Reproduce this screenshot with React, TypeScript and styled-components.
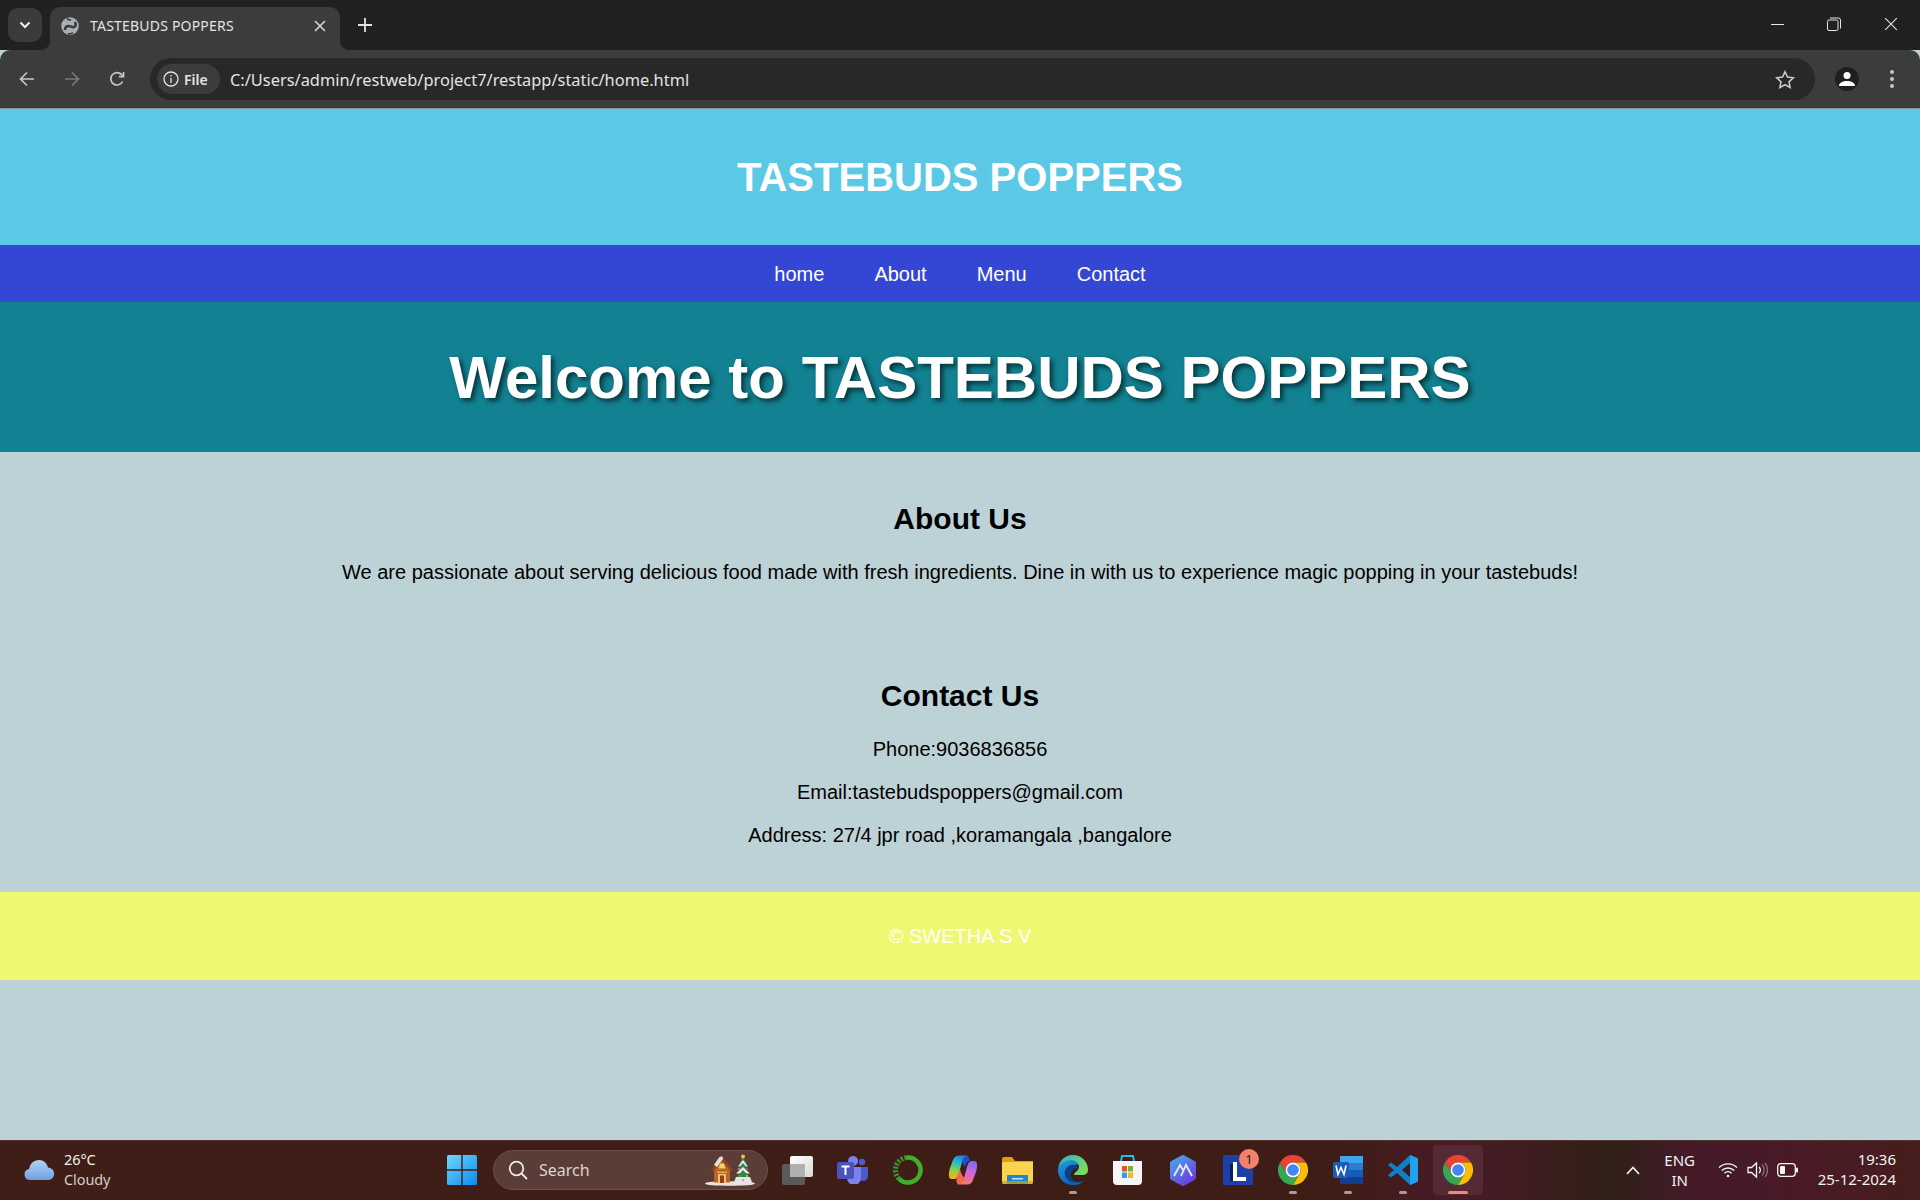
import React from "react";
import styled, { createGlobalStyle } from "styled-components";

const GlobalStyle = createGlobalStyle`
  html, body {
    margin: 0;
    padding: 0;
    height: 100%;
    overflow: hidden;
    background: #bdd2d6;
  }
`;

const Screen = styled.div`
  width: 1920px;
  height: 1200px;
  display: flex;
  flex-direction: column;
  overflow: hidden;
  font-family: "Liberation Sans", Arial, sans-serif;
`;

/* browser chrome */
const TabStrip = styled.div`
  height: 50px;
  flex: none;
  display: flex;
  align-items: flex-end;
  background: #202222;
  padding-left: 8px;
  color: #e3e3e3;
  font-family: "Noto Sans", "Open Sans", sans-serif;
`;

const TabMenu = styled.div`
  width: 34px;
  height: 34px;
  margin-bottom: 8px;
  margin-right: 8px;
  border-radius: 10px;
  background: #3a3b3b;
  display: flex;
  align-items: center;
  justify-content: center;
`;

const Tab = styled.div`
  position: relative;
  width: 290px;
  height: 43px;
  box-sizing: border-box;
  background: #3c3c3c;
  border-radius: 10px 10px 0 0;
  display: flex;
  align-items: center;
  padding: 0 14px 6px 11px;
  font-size: 14px;
  letter-spacing: 0.2px;

  &::before,
  &::after {
    content: "";
    position: absolute;
    bottom: 0;
    width: 10px;
    height: 10px;
  }

  &::before {
    left: -10px;
    background: radial-gradient(circle at 0 0, transparent 10px, #3c3c3c 10.5px);
  }

  &::after {
    right: -10px;
    background: radial-gradient(circle at 100% 0, transparent 10px, #3c3c3c 10.5px);
  }
`;

const TabTitle = styled.span`
  flex: 1;
  margin-left: 11px;
`;

const NewTab = styled.div`
  width: 36px;
  height: 36px;
  margin: 0 0 7px 7px;
  display: flex;
  align-items: center;
  justify-content: center;
`;

const WindowControls = styled.div`
  margin-left: auto;
  height: 100%;
  display: flex;
  align-items: center;
  gap: 43px;
  padding-right: 22px;
  padding-bottom: 2px;
  box-sizing: border-box;
`;

const Toolbar = styled.div`
  height: 58px;
  flex: none;
  box-sizing: border-box;
  background: #3c3c3c;
  border-top-left-radius: 10px;
  border-top-right-radius: 10px;
  display: flex;
  align-items: center;
  padding: 0 14px 0 9px;
`;

const NavButton = styled.div`
  width: 36px;
  height: 36px;
  margin-right: 9px;
  display: flex;
  align-items: center;
  justify-content: center;
`;

const Omnibox = styled.div`
  width: 1665px;
  height: 42px;
  margin-left: 6px;
  box-sizing: border-box;
  border-radius: 21px;
  background: #282828;
  display: flex;
  align-items: center;
  padding: 0 20px 0 7px;
  font-family: "Noto Sans", "Open Sans", sans-serif;
  color: #e3e3e3;
  font-size: 16.4px;
  letter-spacing: 0;
`;

const SecurityChip = styled.div`
  width: 63px;
  height: 30px;
  border-radius: 15px;
  background: #3c3c3c;
  display: flex;
  align-items: center;
  gap: 5px;
  padding-left: 6px;
  box-sizing: border-box;
  font-size: 14px;
  font-weight: 600;
  margin-right: 10px;
`;

const Url = styled.span`
  flex: 1;
`;

const Avatar = styled.div`
  width: 24px;
  height: 24px;
  margin-left: 20px;
  border-radius: 50%;
  background: #1f1f1f;
  display: flex;
  align-items: center;
  justify-content: center;
`;

const Kebab = styled.div`
  margin-left: 31px;
  display: flex;
  flex-direction: column;
  gap: 3px;

  i {
    width: 4px;
    height: 4px;
    border-radius: 50%;
    background: #c7c7c7;
  }
`;

/* page */
const Page = styled.div`
  flex: 1;
  min-height: 0;
  overflow: hidden;
  background: #bdd2d6;
  border-top: 1px solid #8a8f92;
  box-sizing: border-box;
  text-align: center;
  color: #000;
`;

const Header = styled.header`
  height: 136px;
  background: #5bc8e6;
  display: flex;
  align-items: center;
  justify-content: center;
  color: #fff;
`;

const SiteTitle = styled.h1`
  margin: 0;
  font-size: 40px;
  font-weight: 700;
`;

const Nav = styled.nav`
  height: 57px;
  box-sizing: border-box;
  padding-top: 1px;
  background: #3447d4;
  display: flex;
  align-items: center;
  justify-content: center;
  gap: 50px;
`;

const NavLink = styled.a`
  color: #fff;
  font-size: 20px;
  text-decoration: none;
`;

const Hero = styled.div`
  height: 150px;
  background: #128191;
  display: flex;
  align-items: center;
  justify-content: center;
`;

const HeroTitle = styled.h2`
  margin: 0;
  color: #fff;
  font-size: 60px;
  font-weight: 700;
  text-shadow: 3px 3px 5px rgba(0, 0, 0, 0.6);
`;

const Section = styled.section<{ $gap: number }>`
  padding: 25px 0 24px;
  margin-bottom: ${(p) => p.$gap}px;
`;

const SectionTitle = styled.h2`
  margin: 25px 0;
  font-size: 30px;
  font-weight: 700;
`;

const Text = styled.p`
  margin: 20px 0;
  font-size: 20px;
`;

const Footer = styled.footer`
  height: 88px;
  background: #f0f872;
  color: #fff;
  font-size: 20px;
  display: flex;
  align-items: center;
  justify-content: center;
`;

/* taskbar */
const Taskbar = styled.div`
  height: 60px;
  flex: none;
  box-sizing: border-box;
  border-top: 1px solid #55382f;
  padding-bottom: 1px;
  background: linear-gradient(
    90deg,
    #3f1e18 0%,
    #3f1d17 70%,
    #4a1a28 76%,
    #3a1e1c 81%,
    #2f2018 84%,
    #451a28 88%,
    #4a1a26 94%,
    #451e1c 100%
  );
  display: grid;
  grid-template-columns: 440px auto 1fr;
  align-items: center;
  color: #f2f2f2;
  font-family: "Noto Sans", "Open Sans", sans-serif;
`;

const Weather = styled.div`
  display: flex;
  align-items: center;
  padding-left: 24px;
  gap: 9px;
  font-size: 14.5px;
  line-height: 20px;
  letter-spacing: -0.1px;
`;

const WeatherText = styled.div`
  padding-bottom: 2px;
`;

const WeatherNote = styled.div`
  color: #d6cdc9;
`;

const CenterGroup = styled.div`
  display: flex;
  align-items: center;
`;

const StartSlot = styled.div`
  width: 44px;
  height: 48px;
  display: flex;
  align-items: center;
  justify-content: center;
  margin-right: 9px;
`;

const SearchBox = styled.div`
  width: 275px;
  height: 40px;
  box-sizing: border-box;
  border-radius: 20px;
  background: #5a3d36;
  border: 1px solid #6c5048;
  display: flex;
  align-items: center;
  padding: 0 7px 0 14px;
  gap: 11px;
  font-size: 16px;
  color: #ddd5d2;
  margin-right: 2px;
`;

const SearchLabel = styled.span`
  flex: 1;
`;

const AppSlot = styled.div<{ $active?: boolean }>`
  position: relative;
  width: 55px;
  height: 50px;
  display: flex;
  align-items: center;
  justify-content: center;

  &::before {
    content: "";
    position: absolute;
    top: 0;
    bottom: 0;
    left: 3px;
    right: 2px;
    border-radius: 5px;
    background: ${(p) => (p.$active ? "rgba(255,255,255,0.07)" : "transparent")};
  }

  svg {
    position: relative;
  }
`;

const RunDot = styled.span<{ $active?: boolean }>`
  position: absolute;
  left: 50%;
  bottom: 1px;
  transform: translateX(-50%);
  width: ${(p) => (p.$active ? 20 : 8)}px;
  height: 3px;
  border-radius: 2px;
  background: ${(p) => (p.$active ? "#f08a72" : "#a89c98")};
`;

const Badge = styled.span`
  position: absolute;
  top: 4px;
  right: 6px;
  width: 20px;
  height: 20px;
  border-radius: 50%;
  background: #f4826a;
  color: #2a1510;
  font-size: 13px;
  display: flex;
  align-items: center;
  justify-content: center;
`;

const Tray = styled.div`
  display: flex;
  align-items: center;
  justify-content: flex-end;
  padding-right: 24px;
`;

const TrayLang = styled.div`
  width: 40px;
  margin: 0 18px 0 20px;
  padding-bottom: 1px;
  text-align: center;
  font-size: 15px;
  line-height: 20px;
`;

const TrayIcons = styled.div`
  display: flex;
  align-items: center;
  gap: 9px;
`;

const Clock = styled.div`
  margin-left: 20px;
  padding-bottom: 2px;
  text-align: right;
  font-size: 15px;
  line-height: 20px;
`;

const Back = () => (
  <svg width="18" height="18" viewBox="0 0 18 18" fill="none" stroke="#c7c7c7" strokeWidth="1.7">
    <path d="M16 9H2.500M9 2.500 2.500 9 9 15.500" />
  </svg>
);

const Forward = () => (
  <svg width="18" height="18" viewBox="0 0 18 18" fill="none" stroke="#7a7a7a" strokeWidth="1.7">
    <path d="M2 9h13.500M9 2.500 15.500 9 9 15.500" />
  </svg>
);

const Reload = () => (
  <svg width="18" height="18" viewBox="0 0 18 18" fill="none" stroke="#c7c7c7" strokeWidth="1.7">
    <path d="M14.600 11.500A6.200 6.200 0 1 1 13.600 4.600L15.500 6.500" />
    <path d="M15.500 2v4.600h-4.600" />
  </svg>
);

const Globe = () => (
  <svg width="18" height="18" viewBox="0 0 18 18">
    <circle cx="9" cy="9" r="8.800" fill="#a9afb5" />
    <path d="M4 13c0-3 2-4 4-4s3 2 5 1 2-3 1-5" fill="none" stroke="#3c3c3c" strokeWidth="2.600" />
    <path d="M6 1.500c1 1.500 3 1.500 4 1" fill="none" stroke="#3c3c3c" strokeWidth="1.600" />
    <path d="M7 16.500c2 .5 4 0 5-1" fill="none" stroke="#3c3c3c" strokeWidth="1.400" />
  </svg>
);

const Close = ({ size = 12, color = "#d5d5d5", width = 1.6 }: { size?: number; color?: string; width?: number }) => (
  <svg width={size} height={size} viewBox="0 0 12 12" fill="none" stroke={color} strokeWidth={width}>
    <path d="M1 1l10 10M11 1 1 11" />
  </svg>
);

const Cloud = () => (
  <svg width="31" height="20" viewBox="0 0 31 20">
    <defs>
      <linearGradient id="cloudFill" x1="0" y1="0" x2="0" y2="1">
        <stop offset="0" stopColor="#b3d2f5" />
        <stop offset="1" stopColor="#6f9fe0" />
      </linearGradient>
    </defs>
    <path d="M6 20a5.500 5.500 0 0 1-1-10.900A10 10 0 0 1 15 0c4.500 0 8 3 9 7.500A6.300 6.300 0 0 1 25 20z" fill="url(#cloudFill)" />
  </svg>
);

const WindowsLogo = () => (
  <svg width="30" height="30" viewBox="0 0 30 30">
    <defs>
      <linearGradient id="winFill" x1="0" y1="0" x2="1" y2="1">
        <stop offset="0" stopColor="#6fd6fb" />
        <stop offset="1" stopColor="#0a8df0" />
      </linearGradient>
    </defs>
    <path d="M0 1.500A1.500 1.500 0 0 1 1.500 0h12.800v14.300H0zM15.700 0h12.800A1.500 1.500 0 0 1 30 1.500v12.800H15.700zM0 15.700h14.300V30H1.500A1.500 1.500 0 0 1 0 28.500zM15.700 15.700H30v12.800a1.500 1.500 0 0 1-1.500 1.500H15.700z" fill="url(#winFill)" />
  </svg>
);

const SearchGlass = () => (
  <svg width="20" height="20" viewBox="0 0 20 20" fill="none" stroke="#efe9e6" strokeWidth="1.800">
    <circle cx="8.500" cy="8.500" r="6.800" />
    <path d="m13.500 13.500 5 5" strokeLinecap="round" />
  </svg>
);

const WinterScene = () => (
  <svg width="55" height="32" viewBox="0 0 55 32">
    <ellipse cx="25" cy="29.500" rx="25" ry="2.300" fill="#eae3df" />
    <path d="M9 14 17 4l8 10v14.500H9z" fill="#b9622a" />
    <path d="M6 16 17 2l11 14-2.500 1L17 7 8.500 17z" fill="#8f4320" />
    <path d="M9 11 14 3.500l3-1.500 1 3-6 8z" fill="#eadfd6" />
    <path d="M15 9.500h4l1.500 5h-7z" fill="#f3cf6d" />
    <path d="M12 17.500h10v1.500H12z" fill="#f0a24a" />
    <rect x="13" y="20" width="8" height="9" fill="#f0c36b" />
    <rect x="15" y="21.500" width="4" height="7.500" fill="#8f3f1c" />
    <path d="M38 3l3.500 6h-7z" fill="#2f8a44" />
    <path d="M38 6l5 6.500H33z" fill="#e8eef0" />
    <path d="M38 9l6 7H32z" fill="#2f8a44" />
    <path d="M38 13l7 6.500H31z" fill="#e8eef0" />
    <path d="M38 16l7.500 8h-15z" fill="#2f8a44" />
    <path d="M31 23h14l2 5H29z" fill="#dfe6ea" />
    <circle cx="38" cy="2.500" r="2" fill="#f2c230" />
    <circle cx="35" cy="22" r="1" fill="#d9534f" />
    <circle cx="41" cy="15" r="1" fill="#d9534f" />
    <circle cx="42" cy="22" r="1" fill="#f2c230" />
    <circle cx="34" cy="15" r="1" fill="#e86aa8" />
    <circle cx="38" cy="26" r="1" fill="#e86aa8" />
  </svg>
);

const CopyWindows = () => (
  <svg width="31" height="29" viewBox="0 0 31 29">
    <defs>
      <linearGradient id="copyBack" x1="0" y1="0" x2="1" y2="1">
        <stop offset="0" stopColor="#ffffff" />
        <stop offset="1" stopColor="#d9d9d9" />
      </linearGradient>
    </defs>
    <rect x="8" y="0" width="23" height="21" rx="2" fill="url(#copyBack)" />
    <rect x="0" y="8" width="23" height="21" rx="2" fill="#5a5a5a" />
    <rect x="8" y="8" width="15" height="13" fill="#b0b0b0" />
  </svg>
);

const Teams = () => (
  <svg width="31" height="28" viewBox="0 0 31 28">
    <circle cx="16" cy="5" r="5" fill="#7b83eb" />
    <circle cx="25" cy="6" r="3.300" fill="#5059c9" />
    <path d="M21 11h10v9a5 5 0 0 1-8 4z" fill="#5059c9" />
    <path d="M9 11h15v11a7 7 0 0 1-14 0z" fill="#7b83eb" />
    <rect x="0" y="6" width="17" height="17" rx="2" fill="#4b53bc" />
    <path d="M4.500 10.500h8M8.500 10.500V19" stroke="#fff" strokeWidth="2" />
  </svg>
);

const GreenRing = () => (
  <svg width="30" height="30" viewBox="0 0 30 30" fill="none">
    <path d="M13 2.700a12.500 12.500 0 1 1-7 21" stroke="#3fae2a" strokeWidth="4.500" />
    <path d="M6 23.700A12.500 12.500 0 0 1 13 2.700" stroke="#3f9a30" strokeWidth="5" strokeDasharray="2 1.600" />
  </svg>
);

const Copilot = () => (
  <svg width="30" height="30" viewBox="0 0 30 30">
    <defs>
      <linearGradient id="copA" x1="0.600" y1="0" x2="0.300" y2="1">
        <stop offset="0" stopColor="#1f7fe0" />
        <stop offset="0.35" stopColor="#25c0c8" />
        <stop offset="0.65" stopColor="#8ccf48" />
        <stop offset="1" stopColor="#f7b21e" />
      </linearGradient>
      <linearGradient id="copB" x1="0.600" y1="0" x2="0.400" y2="1">
        <stop offset="0" stopColor="#7a6cf0" />
        <stop offset="0.5" stopColor="#d566d8" />
        <stop offset="1" stopColor="#f7786a" />
      </linearGradient>
    </defs>
    <path d="M11 .500h9c-3 .500-5 3-6 6.500l-3 11c-1 3.500-2 6-5 6H3.500C.500 24 .200 19 2 13l3-8c1-3 3-4.500 6-4.500z" fill="url(#copA)" />
    <path d="M19 29.500h-9c3-.500 5-3 6-6.500l3-11c1-3.500 2-6 5-6h2.500c3 0 3.300 5 1.500 11l-3 8c-1 3-3 4.500-6 4.500z" fill="url(#copB)" />
    <path d="M12 14c1 5 3 8 5 9-1 3-3 6-7 6.500-2-2-2-5-1-8z" fill="#f0684e" />
    <path d="M14 7c1-3 3-6 6-6.500l2 5.500c-3 0-4 3-5 6z" fill="#1f4fc8" />
  </svg>
);

const Folder = () => (
  <svg width="31" height="27" viewBox="0 0 31 27">
    <path d="M0 2a2 2 0 0 1 2-2h8l3 4h18v6H0z" fill="#d9a00f" />
    <path d="M0 5h31v20a2 2 0 0 1-2 2H2a2 2 0 0 1-2-2z" fill="#fcd34d" />
    <path d="M5 19a1 1 0 0 1 1-1h19a1 1 0 0 1 1 1v8H5z" fill="#1b86d1" />
    <rect x="10" y="21" width="11" height="1.500" fill="#bfe3fa" />
    <path d="M0 25a2 2 0 0 0 2 2h27a2 2 0 0 0 2-2v-1H0z" fill="#d9a00f" opacity="0.7" />
  </svg>
);

const Edge = () => (
  <svg width="30" height="30" viewBox="0 0 30 30">
    <defs>
      <linearGradient id="edgeA" x1="0" y1="0" x2="0.400" y2="1">
        <stop offset="0" stopColor="#26a6e0" />
        <stop offset="1" stopColor="#0c63b8" />
      </linearGradient>
      <linearGradient id="edgeB" x1="0" y1="0" x2="1" y2="0.600">
        <stop offset="0" stopColor="#25b4c8" />
        <stop offset="1" stopColor="#7bdc5e" />
      </linearGradient>
    </defs>
    <path d="M15 0C6 0 0 7 0 15c0 9 7 15 15 15 4 0 8-1 10-4-4 2-10 2-12-2-3-4-2-9 1-12 2-2 5-3 7-2L15 0z" fill="url(#edgeA)" />
    <path d="M15 0c9 0 15 7 15 15 0 4-3 5-6 5h-8c0-3 5-4 5-8 0-4-4-7-8-7-5 0-10 3-12 7C2 5 8 0 15 0z" fill="url(#edgeB)" />
    <path d="M13 10c-5 2-7 6-6 10 1 5 6 8 12 7-5-1-7-5-6-9 1-3 4-5 8-5-2-3-5-4-8-3z" fill="#0b3f86" />
  </svg>
);

const Store = () => (
  <svg width="29" height="30" viewBox="0 0 29 30">
    <path d="M8 6 9 1h11l1 5" fill="none" stroke="#2fb5ea" strokeWidth="2" />
    <path d="M0 6h29v20a4 4 0 0 1-4 4H4a4 4 0 0 1-4-4z" fill="#f6f6f6" />
    <rect x="9" y="11" width="5" height="5.500" fill="#e8532b" />
    <rect x="15" y="11" width="5" height="5.500" fill="#7db32b" />
    <rect x="9" y="17.500" width="5" height="5.500" fill="#27a4e8" />
    <rect x="15" y="17.500" width="5" height="5.500" fill="#f4b71d" />
  </svg>
);

const Hexagon = () => (
  <svg width="28" height="31" viewBox="0 0 28 31">
    <defs>
      <linearGradient id="hexFill" x1="0" y1="0" x2="0.700" y2="1">
        <stop offset="0" stopColor="#4aa8e8" />
        <stop offset="1" stopColor="#6a3fe0" />
      </linearGradient>
    </defs>
    <path d="M14 2 25 8v15l-11 6-11-6V8z" fill="url(#hexFill)" stroke="url(#hexFill)" strokeWidth="4" strokeLinejoin="round" />
    <path d="M5 21 11 10l3 5M12 21l5-11 6 11" fill="none" stroke="#e6ecff" strokeWidth="1.800" />
  </svg>
);

const LSquare = () => (
  <svg width="30" height="30" viewBox="0 0 30 30">
    <rect width="30" height="30" fill="#1c3fa8" />
    <path d="M7 9h5v17H7z" fill="#0c1f55" />
    <path d="M10 7h4v15h9v4H10z" fill="#fff" />
  </svg>
);

const Chrome = () => (
  <svg width="30" height="30" viewBox="0 0 30 30">
    <path d="M2 7.500A15 15 0 0 1 28 7.500H15A7.500 7.500 0 0 0 8.500 18.750z" fill="#ea4335" />
    <path d="M28 7.500A15 15 0 0 1 15 30L21.500 18.750A7.500 7.500 0 0 0 15 7.500z" fill="#fbbc04" />
    <path d="M15 30A15 15 0 0 1 2 7.500L8.500 18.750A7.500 7.500 0 0 0 21.500 18.750z" fill="#34a853" />
    <circle cx="15" cy="15" r="7.500" fill="#fff" />
    <circle cx="15" cy="15" r="5.800" fill="#4285f4" />
  </svg>
);

const Word = () => (
  <svg width="30" height="28" viewBox="0 0 30 28">
    <rect x="7" y="0" width="23" height="7" fill="#41a5ee" />
    <rect x="7" y="7" width="23" height="7" fill="#2b7cd3" />
    <rect x="7" y="14" width="23" height="7" fill="#185abd" />
    <rect x="7" y="21" width="23" height="7" fill="#103f91" />
    <rect x="0" y="6" width="16" height="16" rx="1.500" fill="#1a5cb8" />
    <path d="M3 9.500l2 9 3-7 3 7 2-9" fill="none" stroke="#fff" strokeWidth="1.600" />
  </svg>
);

const VsCode = () => (
  <svg width="30" height="30" viewBox="0 0 30 30">
    <path d="M22 0 30 3.500v23L22 30 9 18l-6 4.500L0 20l6-5-6-5 3-2.500L9 12z" fill="#0f7fcc" />
    <path d="M22 0 30 3.500v23L22 30z" fill="#24a1ec" />
    <path d="M22 8v14l-8-7z" fill="#3c1d18" />
  </svg>
);

const Wifi = () => (
  <svg width="20" height="16" viewBox="0 0 20 16" fill="none" stroke="#f5f5f5" strokeWidth="1.400">
    <path d="M1 5.500a13 13 0 0 1 18 0M3.800 8.500a9 9 0 0 1 12.400 0M6.500 11.200a5 5 0 0 1 7 0" />
    <circle cx="10" cy="14" r="1.300" fill="#f5f5f5" stroke="none" />
  </svg>
);

const Volume = () => (
  <svg width="21" height="18" viewBox="0 0 21 18" fill="none" stroke="#f5f5f5" strokeWidth="1.300">
    <path d="M1 6.500h3.500L9.500 2v14l-5-4.500H1z" />
    <path d="M12 6a4 4 0 0 1 0 6" />
    <path d="M15 3.500a8 8 0 0 1 0 11M18 2a11 11 0 0 1 0 14" stroke="#8d7279" />
  </svg>
);

const Battery = () => (
  <svg width="21" height="14" viewBox="0 0 21 14">
    <rect x="0.700" y="0.700" width="17.600" height="12.600" rx="3" fill="none" stroke="#f5f5f5" strokeWidth="1.300" />
    <rect x="3" y="3" width="5" height="8" rx="1" fill="#f5f5f5" />
    <rect x="19" y="4.500" width="2" height="5" rx="1" fill="#f5f5f5" />
  </svg>
);

const apps: { key: string; icon: React.ReactNode; running?: boolean; active?: boolean; badge?: string }[] = [
  { key: "copy", icon: <CopyWindows /> },
  { key: "teams", icon: <Teams /> },
  { key: "ring", icon: <GreenRing /> },
  { key: "copilot", icon: <Copilot /> },
  { key: "files", icon: <Folder /> },
  { key: "edge", icon: <Edge />, running: true },
  { key: "store", icon: <Store /> },
  { key: "hex", icon: <Hexagon /> },
  { key: "lsquare", icon: <LSquare />, badge: "1" },
  { key: "chrome", icon: <Chrome />, running: true },
  { key: "word", icon: <Word />, running: true },
  { key: "code", icon: <VsCode />, running: true },
  { key: "chrome2", icon: <Chrome />, running: true, active: true },
];

const navItems = ["home", "About", "Menu", "Contact"];

const App = () => (
  <Screen>
    <GlobalStyle />
    <TabStrip>
      <TabMenu>
        <svg width="12" height="8" viewBox="0 0 12 8" fill="none" stroke="#f0f0f0" strokeWidth="2">
          <path d="m1.500 1.500 4.500 4.500 4.500-4.500" />
        </svg>
      </TabMenu>
      <Tab>
        <Globe />
        <TabTitle>TASTEBUDS POPPERS</TabTitle>
        <Close />
      </Tab>
      <NewTab>
        <svg width="14" height="14" viewBox="0 0 14 14" stroke="#e3e3e3" strokeWidth="1.800">
          <path d="M7 0v14M0 7h14" />
        </svg>
      </NewTab>
      <WindowControls>
        <svg width="13" height="13" viewBox="0 0 13 13" stroke="#e6e6e6">
          <path d="M0 6.500h13" />
        </svg>
        <svg width="14" height="14" viewBox="0 0 14 14" fill="none" stroke="#e6e6e6">
          <rect x="0.500" y="3" width="10.500" height="10.500" rx="1.500" />
          <path d="M3 1h8.500A2 2 0 0 1 13.500 3v8.500" />
        </svg>
        <Close size={14} color="#e6e6e6" width={0.9} />
      </WindowControls>
    </TabStrip>
    <Toolbar>
      <NavButton>
        <Back />
      </NavButton>
      <NavButton>
        <Forward />
      </NavButton>
      <NavButton>
        <Reload />
      </NavButton>
      <Omnibox>
        <SecurityChip>
          <svg width="16" height="16" viewBox="0 0 16 16" fill="none" stroke="#e3e3e3" strokeWidth="1.300">
            <circle cx="8" cy="8" r="7" />
            <path d="M8 7v5M8 4v1.600" />
          </svg>
          File
        </SecurityChip>
        <Url>C:/Users/admin/restweb/project7/restapp/static/home.html</Url>
        <svg width="20" height="19" viewBox="0 0 20 19" fill="none" stroke="#c7c7c7" strokeWidth="1.600">
          <path d="m10 1.800 2.500 5.300 5.800.7-4.300 4 1.100 5.700-5.100-2.800-5.100 2.800 1.100-5.700-4.300-4 5.800-.7z" />
        </svg>
      </Omnibox>
      <Avatar>
        <svg width="16" height="16" viewBox="0 0 16 16" fill="#fff">
          <circle cx="8" cy="4.500" r="3.500" />
          <path d="M0 15c0-3.500 4-5 8-5s8 1.500 8 5z" />
        </svg>
      </Avatar>
      <Kebab>
        <i />
        <i />
        <i />
      </Kebab>
    </Toolbar>
    <Page>
      <Header>
        <SiteTitle>TASTEBUDS POPPERS</SiteTitle>
      </Header>
      <Nav>
        {navItems.map((item) => (
          <NavLink key={item}>{item}</NavLink>
        ))}
      </Nav>
      <Hero>
        <HeroTitle>Welcome to TASTEBUDS POPPERS</HeroTitle>
      </Hero>
      <Section $gap={1}>
        <SectionTitle>About Us</SectionTitle>
        <Text>
          We are passionate about serving delicious food made with fresh ingredients. Dine in with us to experience
          magic popping in your tastebuds!
        </Text>
      </Section>
      <Section $gap={1}>
        <SectionTitle>Contact Us</SectionTitle>
        <Text>Phone:9036836856</Text>
        <Text>Email:tastebudspoppers@gmail.com</Text>
        <Text>Address: 27/4 jpr road ,koramangala ,bangalore</Text>
      </Section>
      <Footer>© SWETHA S V</Footer>
    </Page>
    <Taskbar>
      <Weather>
        <Cloud />
        <WeatherText>
          <div>26°C</div>
          <WeatherNote>Cloudy</WeatherNote>
        </WeatherText>
      </Weather>
      <CenterGroup>
        <StartSlot>
          <WindowsLogo />
        </StartSlot>
        <SearchBox>
          <SearchGlass />
          <SearchLabel>Search</SearchLabel>
          <WinterScene />
        </SearchBox>
        {apps.map((app) => (
          <AppSlot key={app.key} $active={app.active}>
            {app.icon}
            {app.badge && <Badge>{app.badge}</Badge>}
            {app.running && <RunDot $active={app.active} />}
          </AppSlot>
        ))}
      </CenterGroup>
      <Tray>
        <svg width="14" height="9" viewBox="0 0 14 9" fill="none" stroke="#f5f5f5" strokeWidth="1.600">
          <path d="m1 8 6-6.500L13 8" />
        </svg>
        <TrayLang>
          ENG
          <br />
          IN
        </TrayLang>
        <TrayIcons>
          <Wifi />
          <Volume />
          <Battery />
        </TrayIcons>
        <Clock>
          19:36
          <br />
          25-12-2024
        </Clock>
      </Tray>
    </Taskbar>
  </Screen>
);

export default App;
